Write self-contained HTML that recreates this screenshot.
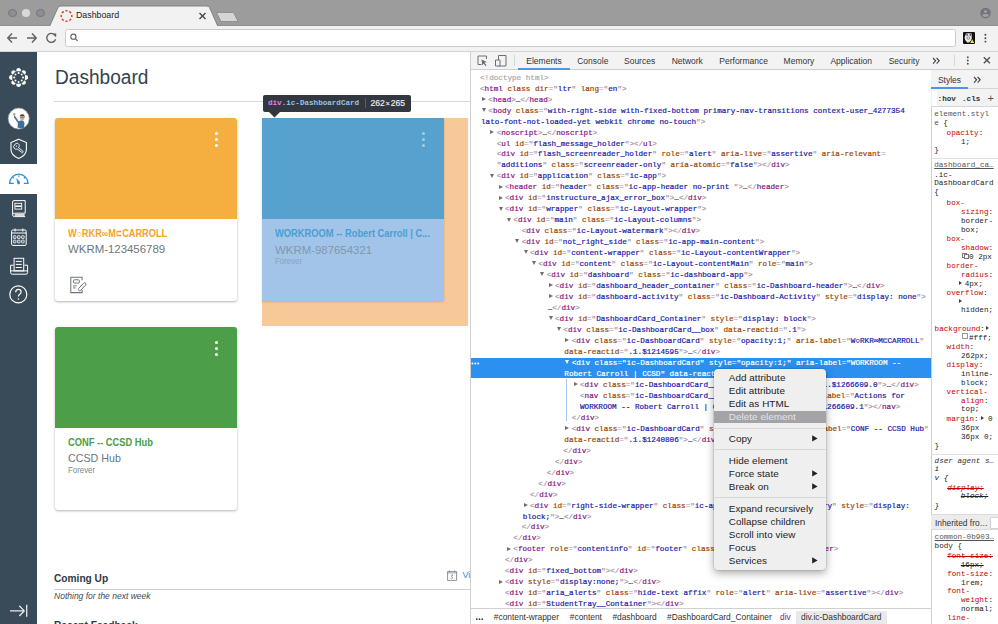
<!DOCTYPE html>
<html><head><meta charset="utf-8">
<style>
*{box-sizing:border-box}
html,body{margin:0;padding:0}
body{width:998px;height:624px;overflow:hidden;position:relative;background:#fff;font-family:"Liberation Sans",sans-serif}
.abs{position:absolute}
/* browser chrome */
#tabstrip{position:absolute;left:0;top:0;width:998px;height:26px;background:#9c9c9c}
#toolbar{position:absolute;left:0;top:26px;width:998px;height:26px;background:#f2f2f2;border-bottom:1.5px solid #d4d4d4}
.light{position:absolute;width:8.8px;height:8.8px;border-radius:50%;top:8.5px}
#addr{position:absolute;left:65px;top:29.3px;width:891px;height:18px;background:#fff;border:1px solid #cbcbcb;border-radius:2.5px}
/* canvas nav */
#nav{position:absolute;left:0;top:51.8px;width:37px;height:573px;background:#394b58}
#navactive{position:absolute;left:0;top:163.5px;width:37px;height:30.5px;background:#fff}
/* content */
.card{position:absolute;width:182px;height:183px;background:#fff;border-radius:3px;box-shadow:0 1px 2.5px rgba(0,0,0,.3);overflow:hidden}
.card .hd{position:absolute;left:0;top:0;width:100%;height:101px}
.dots{position:absolute;width:3px;height:3px;background:#fff;border-radius:50%}
.ttl{position:absolute;left:13px;font-weight:bold;font-size:10.3px;line-height:1;white-space:nowrap;transform:scaleX(0.906);transform-origin:0 0}
.sub{position:absolute;left:13px;font-size:10.7px;line-height:1;color:#6b7780;white-space:nowrap;transform-origin:0 0}
.term{position:absolute;left:13px;font-size:8.2px;line-height:1;color:#7c8890;white-space:nowrap;transform:scaleX(0.959);transform-origin:0 0}
/* devtools */
#dt{position:absolute;left:470px;top:52px;width:528px;height:572px;background:#fff;border-left:1px solid #d0d0d0}
#dttabs{position:absolute;left:471px;top:52px;width:527px;height:17.5px;background:#f3f3f3;border-bottom:1px solid #cdcdcd}
.tab{position:absolute;top:57px;font-size:8.5px;color:#333;white-space:nowrap;line-height:1}
.ln{position:absolute;-webkit-text-stroke:0.2px currentColor;white-space:pre;font-family:"Liberation Mono",monospace;font-size:7.63px;line-height:10px;height:10px}
.ln i{font-style:normal;-webkit-text-stroke:0.2px}
.t{color:#881280}
.b{color:#a894a6}
.a{color:#994500}
.v{color:#1a1aa6}
.e{color:#222}
.dt{color:#a9a9a9}
.sel i{color:#fff!important}
.ar{position:absolute;width:0;height:0}
.ar.r{border-left:4px solid #6e6e6e;border-top:2.6px solid transparent;border-bottom:2.6px solid transparent}
.ar.r.w{border-left-color:#fff}.ar.d.w{border-top-color:#fff}
.ar.d{border-top:4px solid #6e6e6e;border-left:2.6px solid transparent;border-right:2.6px solid transparent}
.sty{position:absolute;white-space:pre;font-family:"Liberation Mono",monospace;font-size:7.63px;line-height:10px;color:#222}
.pn{color:#c80000}
.crumb{position:absolute;top:612.5px;font-size:8.4px;color:#333;line-height:1;white-space:nowrap}
.menu{position:absolute;font-size:9.9px;letter-spacing:0.05px;color:#333;white-space:nowrap;line-height:1}
</style></head><body>

<!-- ============ BROWSER CHROME ============ -->
<div id="tabstrip"></div><div class="abs" style="left:0;top:25px;width:998px;height:1px;background:#8f8f8f"></div>
<div class="light" style="left:7.9px;top:8.7px;background:#8d8d93;border:1px solid #77777c"></div>
<div class="light" style="left:22.4px;top:9.3px;width:7.6px;height:7.6px;background:#d9d9d9"></div>
<div class="light" style="left:35.8px;top:8.7px;background:#8d8d93;border:1px solid #77777c"></div>
<svg class="abs" style="left:0;top:0" width="260" height="27">
  <path d="M49.5 26.5 L58 7.5 Q59 6 61 6 L206.5 6 Q208.5 6 209.5 7.5 L218 26.5 Z" fill="#f2f2f2" stroke="#7c7c7c" stroke-width="0.9"/>
  <path d="M216.5 12.5 L233.5 12.5 L238 21.5 L221 21.5 Z" fill="#d5d5d5" stroke="#868686" stroke-width="0.8"/>
</svg>
<svg class="abs" style="left:978px;top:5px" width="16" height="16">
  <circle cx="7.5" cy="8.1" r="5.3" fill="#72767c"/>
  <circle cx="7.5" cy="6.4" r="1.5" fill="#a3a3a3"/>
  <ellipse cx="7.5" cy="10.4" rx="3.1" ry="1.35" fill="#a3a3a3"/>
</svg>
<div id="toolbar"></div>
<svg class="abs" style="left:0;top:0" width="260" height="27">
  <circle cx="66.5" cy="16" r="5.3" fill="none" stroke="#de4a32" stroke-width="1.55" pathLength="8" stroke-dasharray="0.56 0.44" stroke-dashoffset="0.28"/>
  <path d="M199.5 13 L205.5 19 M205.5 13 L199.5 19" stroke="#444" stroke-width="1.3"/>
</svg>
<div class="abs" style="left:76px;top:11px;font-size:8.8px;color:#1a1a1a;line-height:1">Dashboard</div>
<div id="addr"></div>
<svg class="abs" style="left:0;top:25px" width="90" height="26">
  <path d="M8 13 L17 13 M12 8.5 L7.8 13 L12 17.5" fill="none" stroke="#5f6368" stroke-width="1.5"/>
  <path d="M27 13 L36 13 M32 8.5 L36.2 13 L32 17.5" fill="none" stroke="#5f6368" stroke-width="1.5"/>
  <path d="M54.6 9.8 A4.5 4.5 0 1 0 55.6 14.2" fill="none" stroke="#5f6368" stroke-width="1.4"/>
  <path d="M52.4 8.9 L56.3 8.2 L56.1 12.2 Z" fill="#5f6368"/>
  <circle cx="73.4" cy="11.7" r="2.6" fill="none" stroke="#5f6368" stroke-width="1.1"/>
  <path d="M75.3 13.6 L77.6 15.9" stroke="#5f6368" stroke-width="1.3"/>
</svg>
<!-- ext icon + menu -->
<div class="abs" style="left:963px;top:32px;width:11.5px;height:11.5px;background:#111;border-radius:1px"></div>
<svg class="abs" style="left:963px;top:32px" width="12" height="12">
  <path d="M3 1.6 Q5.5 0.8 8.6 1.6 L8.8 6.5 Q8 9.5 6 10.6 L4.2 10.4 Q1.5 8.6 1.6 5.6 Z" fill="#e8e8e8"/>
  <circle cx="4.1" cy="2.9" r="0.8" fill="#222"/><circle cx="7.3" cy="2.9" r="0.8" fill="#222"/>
  <circle cx="5.3" cy="6" r="1.4" fill="none" stroke="#777" stroke-width="0.7"/>
  <path d="M7.2 11 L9.2 7.2 L11.3 11 Z" fill="#f2e23a"/>
</svg>
<svg class="abs" style="left:980px;top:30px" width="12" height="16"><g fill="#444"><circle cx="5.4" cy="4.7" r="0.95"/><circle cx="5.4" cy="8.2" r="0.95"/><circle cx="5.4" cy="11.6" r="0.95"/></g></svg>

<!-- ============ CANVAS NAV ============ -->
<div id="nav"></div>
<div id="navactive"></div>
<svg class="abs" style="left:0;top:0" width="37" height="624">
  <!-- canvas logo -->
  <g transform="translate(18.6,77.5)">
    <path d="M-2.40 -6.30 A2.4 3.2 0.0 0 1 2.40 -6.30 Z M2.76 -6.15 A2.4 3.2 45.0 0 1 6.15 -2.76 Z M6.30 -2.40 A2.4 3.2 90.0 0 1 6.30 2.40 Z M6.15 2.76 A2.4 3.2 135.0 0 1 2.76 6.15 Z M2.40 6.30 A2.4 3.2 180.0 0 1 -2.40 6.30 Z M-2.76 6.15 A2.4 3.2 225.0 0 1 -6.15 2.76 Z M-6.30 2.40 A2.4 3.2 270.0 0 1 -6.30 -2.40 Z M-6.15 -2.76 A2.4 3.2 315.0 0 1 -2.76 -6.15 Z" fill="#fff"/>
    <g fill="#fff">
      <circle cx="4.4" cy="0" r="1"/><circle cx="-4.4" cy="0" r="1"/><circle cx="0" cy="4.4" r="1"/><circle cx="0" cy="-4.4" r="1"/>
      <circle cx="3.1" cy="3.1" r="1"/><circle cx="-3.1" cy="3.1" r="1"/><circle cx="3.1" cy="-3.1" r="1"/><circle cx="-3.1" cy="-3.1" r="1"/>
    </g>
  </g>
  <!-- avatar -->
  <circle cx="18.7" cy="118.6" r="10.5" fill="#fff" stroke="#9aa3aa" stroke-width="0.6"/>
  <path d="M17.5 127.5 L18 122 Q19.5 120.3 21.8 120.3 Q24 120.5 24.5 123 L24 127.8 Q21 129 17.5 127.5 Z" fill="#3f6e96"/>
  <path d="M14.2 114.5 L15.2 116.2 L19 121.8 L18 123 L14 117.5 Z" fill="#3f6e96"/>
  <circle cx="14.2" cy="114.3" r="1.2" fill="#c9a07e"/>
  <ellipse cx="22.2" cy="117.6" rx="2.3" ry="2.8" fill="#d9ad8a"/>
  <path d="M19.8 116.5 Q20 114 22.4 114.2 Q24.8 114.3 24.7 117.5 L24 116 L20.5 116 Z" fill="#5a3826"/>
  <path d="M20 117.3 H24.3" stroke="#4a6d8a" stroke-width="0.8"/>
  <!-- shield -->
  <path d="M18.7 139.2 L26.4 142.6 V149.5 Q26.4 155.5 18.7 158.4 Q11 155.5 11 149.5 V142.6 Z" fill="none" stroke="#fff" stroke-width="1.1"/>
  <path d="M14.6 145 A2.4 2.4 0 1 1 18.4 147.6 L22.9 151.2 Q23.6 152.4 22.4 152.8 L17.2 149 A2.4 2.4 0 0 1 14.6 145 Z" fill="none" stroke="#fff" stroke-width="0.9"/>
  <circle cx="16.4" cy="146.1" r="0.7" fill="#fff"/>
  <!-- dashboard speedometer (active) -->
  <g fill="none" stroke="#2c8fd6" stroke-width="1.3">
    <path d="M13.8 183.4 H9.6 A9.2 9.2 0 0 1 28 183.4 H23.8"/>
    <path d="M18.8 175.4 V176.8 M12.6 177.3 L13.6 178.3 M25 177.3 L24 178.3"/>
  </g>
  <path d="M16.2 178 L20 182.1 Q20.4 184.3 18.6 184.5 Q16.9 184.3 17.1 182.3 Z" fill="#2c8fd6"/>
  <!-- book -->
  <g fill="none" stroke="#fff" stroke-width="1">
    <path d="M25.2 213.2 V200.6 H14 Q12.6 200.6 12.6 202 V214.8 Q12.6 216.6 14.4 216.6 H25.2"/>
    <path d="M12.8 214.4 Q12.8 213.2 14.4 213.2 H25.2"/>
  </g>
  <rect x="14.9" y="203.3" width="6.8" height="5.8" fill="none" stroke="#fff" stroke-width="0.9"/>
  <rect x="15.3" y="205.4" width="6" height="1.6" fill="#fff"/>
  <rect x="14.6" y="213.8" width="10" height="2.3" fill="#d5d9dc"/>
  <!-- calendar -->
  <g fill="none" stroke="#fff" stroke-width="1">
    <rect x="11.6" y="230" width="14.6" height="15.4" rx="1.2"/>
    <path d="M11.6 233 H26.2 M15 228.5 V231.5 M22.8 228.5 V231.5"/>
  </g>
  <g fill="#5d6b75" stroke="#fff" stroke-width="0.75">
    <rect x="13.4" y="235.7" width="2.6" height="2.8" rx="0.5"/><rect x="17.5" y="235.7" width="2.6" height="2.8" rx="0.5"/><rect x="21.6" y="235.7" width="2.6" height="2.8" rx="0.5"/>
    <rect x="13.4" y="240.1" width="2.6" height="2.8" rx="0.5"/><rect x="17.5" y="240.1" width="2.6" height="2.8" rx="0.5"/><rect x="21.6" y="240.1" width="2.6" height="2.8" rx="0.5"/>
  </g>
  <!-- inbox -->
  <g fill="none" stroke="#fff" stroke-width="1">
    <rect x="14.1" y="258.3" width="9.6" height="12.6"/>
    <path d="M15.8 261.4 H21.8 M15.8 264.4 H21.8 M15.8 267.5 H21.8"/>
    <path d="M13.6 265.2 H10.6 V272.5 Q10.6 274.2 12.3 274.2 H25.9 Q27.6 274.2 27.6 272.5 V265.2 H24.3"/>
    <path d="M10.8 270.9 H27.4"/>
  </g>
  <!-- help -->
  <circle cx="18.3" cy="294.4" r="8.5" fill="none" stroke="#fff" stroke-width="1.2"/>
  <path d="M15.7 292.2 Q15.7 289.3 18.4 289.3 Q21.1 289.3 21.1 291.9 Q21.1 293.5 19.5 294.4 Q18.4 295 18.4 296.6" fill="none" stroke="#fff" stroke-width="1.2"/>
  <circle cx="18.4" cy="299" r="0.8" fill="#fff"/>
  <!-- collapse -->
  <g fill="none" stroke="#e8eaec" stroke-width="1.3">
    <path d="M10 610.9 H24 M19.3 605.8 L24.2 610.9 L19.3 616"/>
    <path d="M26.7 604.7 V616.8"/>
  </g>
</svg>


<!-- ============ CONTENT ============ -->
<div class="abs" style="left:54.8px;top:66.7px;font-size:20px;color:#34434e;line-height:1;transform:scaleX(0.954);transform-origin:0 0;white-space:nowrap">Dashboard</div>
<div class="abs" style="left:54px;top:100.5px;width:416px;height:1px;background:#d3d9dd"></div>

<div class="card" style="left:55px;top:118px">
  <div class="hd" style="background:#f5af40"></div>
  <div class="dots" style="left:159.5px;top:14px"></div>
  <div class="dots" style="left:159.5px;top:20px"></div>
  <div class="dots" style="left:159.5px;top:26px"></div>
  <div class="ttl" style="top:110.8px;color:#f2a232;transform:scaleX(0.895)">W<span style="font-size:9.5px;font-weight:normal;position:relative;top:0px">&#9675;</span>RKR<span style="font-size:10px">&#8734;</span>M<span style="font-size:8px;position:relative;top:-1px">&#8847;</span>CARROLL</div>
  <div class="sub" style="top:126.4px;transform:scaleX(1.068)">WKRM-123456789</div>
  <svg class="abs" style="left:13px;top:157px" width="22" height="22">
    <path d="M14.1 5.2 V2.2 H2.8 V17.6 H14.1 V15" fill="none" stroke="#6b757d" stroke-width="1.05"/>
    <rect x="5.4" y="4.8" width="6" height="3.3" rx="1" fill="none" stroke="#6b757d" stroke-width="1"/>
    <path d="M5 10.9 H8.8 M5 12.9 H7.4" stroke="#8a939a" stroke-width="1.1"/>
    <path d="M10.7 13.4 L15.6 8.2 Q16.7 7.2 17.6 8.1 Q18.5 9.1 17.5 10.2 L12.6 15.4 Q11.6 16.3 10.8 15.5 Q10 14.5 10.7 13.4 Z" fill="none" stroke="#6b757d" stroke-width="1"/>
  </svg>
</div>

<div class="card" style="left:55px;top:327px">
  <div class="hd" style="background:#4c9e48"></div>
  <div class="dots" style="left:159.5px;top:14px"></div>
  <div class="dots" style="left:159.5px;top:20px"></div>
  <div class="dots" style="left:159.5px;top:26px"></div>
  <div class="ttl" style="top:110.8px;color:#4a9e47">CONF -- CCSD Hub</div>
  <div class="sub" style="top:126.2px">CCSD Hub</div>
  <div class="term" style="top:140.3px">Forever</div>
</div>

<!-- inspected card with overlay -->
<div class="abs" style="left:262px;top:118px;width:206px;height:208px;background:#f7c898"></div>
<div class="abs" style="left:262px;top:118px;width:182px;height:183px;background:#a1c4e8;box-shadow:0 1px 2px rgba(0,0,0,.15)"></div>
<div class="abs" style="left:262px;top:118px;width:182px;height:101px;background:#56a1cd"></div>
<div class="dots" style="left:421.5px;top:132px;background:#a9cbe7"></div>
<div class="dots" style="left:421.5px;top:138px;background:#a9cbe7"></div>
<div class="dots" style="left:421.5px;top:144px;background:#a9cbe7"></div>
<div class="ttl" style="left:275px;top:228.6px;color:#4a9fd0">WORKROOM -- Robert Carroll | C...</div>
<div class="sub" style="left:275px;top:244.9px;color:#7f98ad;transform:scaleX(1.068)">WKRM-987654321</div>
<div class="term" style="left:275px;top:257.9px;color:#8aa3b8">Forever</div>

<!-- tooltip -->
<div class="abs" style="left:263px;top:95px;width:148px;height:16.5px;background:#333740;border-radius:2px"></div>
<svg class="abs" style="left:266px;top:110px" width="16" height="8"><path d="M2 1 L8.5 7.5 L15 1 Z" fill="#333740"/></svg>
<div class="abs" style="left:268px;top:100px;font-family:'Liberation Mono',monospace;font-size:7.6px;line-height:1;white-space:pre;font-weight:bold"><span style="color:#e97be0">div</span><span style="color:#93c3ec">.ic-DashboardCard</span></div>
<div class="abs" style="left:364.5px;top:98px;width:1px;height:10px;background:#5a5e66"></div>
<div class="abs" style="left:370.4px;top:98.8px;font-size:8.6px;line-height:1;color:#f0f0f0;white-space:nowrap;-webkit-text-stroke:0.15px #f0f0f0">262<span style="font-size:7.5px;margin:0 0.8px">&#215;</span>265</div>

<!-- coming up -->
<div class="abs" style="left:54.4px;top:571.5px;font-size:11.7px;font-weight:bold;color:#2d3b45;line-height:1;transform:scaleX(0.869);transform-origin:0 0;white-space:nowrap">Coming Up</div>
<div class="abs" style="left:54px;top:588.7px;width:416px;height:1px;background:#c9cfd3"></div>
<div class="abs" style="left:54.4px;top:592.3px;font-size:9px;font-style:italic;color:#3d4a52;line-height:1;transform:scaleX(0.946);transform-origin:0 0;white-space:nowrap">Nothing for the next week</div>
<div class="abs" style="left:54.4px;top:618.5px;font-size:11.7px;font-weight:bold;color:#2d3b45;line-height:1;transform:scaleX(0.869);transform-origin:0 0;white-space:nowrap">Recent Feedback</div>
<svg class="abs" style="left:447px;top:570px" width="11" height="11">
  <path d="M0.6 1.6 H9.6 V10.4 H0.6 Z" fill="none" stroke="#73818b" stroke-width="0.85"/>
  <path d="M0.6 2.9 H9.6 M2.6 0.3 V2.2 M7.6 0.3 V2.2" stroke="#73818b" stroke-width="0.7"/>
  <path d="M3.8 5 H6 L4.5 6.5 Q6.2 6.7 5.5 8.3 Q4.5 8.9 3.6 8.3" fill="none" stroke="#73818b" stroke-width="0.7"/>
</svg>
<div class="abs" style="left:462.5px;top:571px;font-size:9px;color:#2d8ed5;line-height:1">Vi</div>

<!-- ============ DEVTOOLS ============ -->
<div id="dt"></div>
<div id="dttabs"></div>
<!-- selected row bg -->
<div class="abs" style="left:471px;top:357.5px;width:459.5px;height:20.3px;background:#2b90ef"></div>
<svg class="abs" style="left:471px;top:361px" width="10" height="5"><g fill="#fff"><circle cx="1.4" cy="2.5" r="1"/><circle cx="4.3" cy="2.5" r="1"/><circle cx="7.2" cy="2.5" r="1"/></g></svg>
<!-- selected children guide line -->
<div class="abs" style="left:565.5px;top:379px;width:1px;height:42px;background:#a7c3ef"></div>

<div class="ln" style="left:480.00px;top:72.70px"><i class="dt">&lt;!doctype html&gt;</i></div>
<div class="ln" style="left:480.00px;top:83.67px"><i class="b">&lt;</i><i class="t">html</i> <i class="a">class</i> <i class="a">dir</i><i class="b">=&quot;</i><i class="v">ltr</i><i class="b">&quot;</i> <i class="a">lang</i><i class="b">=&quot;</i><i class="v">en</i><i class="b">&quot;&gt;</i></div>
<span class="ar r" style="left:482.13px;top:96.84px"></span><div class="ln" style="left:488.33px;top:94.64px"><i class="b">&lt;</i><i class="t">head</i><i class="b">&gt;</i><i class="e">…</i><i class="b">&lt;/</i><i class="t">head</i><i class="b">&gt;</i></div>
<span class="ar d" style="left:482.13px;top:107.81px"></span><div class="ln" style="left:488.33px;top:105.61px"><i class="b">&lt;</i><i class="t">body</i> <i class="a">class</i><i class="b">=&quot;</i><i class="v">with-right-side with-fixed-bottom primary-nav-transitions context-user_4277354</i></div>
<div class="ln" style="left:481.03px;top:116.58px"><i class="v">lato-font-not-loaded-yet webkit chrome no-touch</i><i class="b">&quot;&gt;</i></div>
<span class="ar r" style="left:490.47px;top:129.75px"></span><div class="ln" style="left:496.67px;top:127.55px"><i class="b">&lt;</i><i class="t">noscript</i><i class="b">&gt;</i><i class="e">…</i><i class="b">&lt;/</i><i class="t">noscript</i><i class="b">&gt;</i></div>
<div class="ln" style="left:496.67px;top:138.52px"><i class="b">&lt;</i><i class="t">ul</i> <i class="a">id</i><i class="b">=&quot;</i><i class="v">flash_message_holder</i><i class="b">&quot;</i><i class="b">&gt;</i><i class="b">&lt;/</i><i class="t">ul</i><i class="b">&gt;</i></div>
<div class="ln" style="left:496.67px;top:149.49px"><i class="b">&lt;</i><i class="t">div</i> <i class="a">id</i><i class="b">=&quot;</i><i class="v">flash_screenreader_holder</i><i class="b">&quot;</i> <i class="a">role</i><i class="b">=&quot;</i><i class="v">alert</i><i class="b">&quot;</i> <i class="a">aria-live</i><i class="b">=&quot;</i><i class="v">assertive</i><i class="b">&quot;</i> <i class="a">aria-relevant</i><i class="b">=</i></div>
<div class="ln" style="left:496.67px;top:160.46px"><i class="b">&quot;</i><i class="v">additions</i><i class="b">&quot;</i> <i class="a">class</i><i class="b">=&quot;</i><i class="v">screenreader-only</i><i class="b">&quot;</i> <i class="a">aria-atomic</i><i class="b">=&quot;</i><i class="v">false</i><i class="b">&quot;&gt;</i><i class="b">&lt;/</i><i class="t">div</i><i class="b">&gt;</i></div>
<span class="ar d" style="left:490.47px;top:173.63px"></span><div class="ln" style="left:496.67px;top:171.43px"><i class="b">&lt;</i><i class="t">div</i> <i class="a">id</i><i class="b">=&quot;</i><i class="v">application</i><i class="b">&quot;</i> <i class="a">class</i><i class="b">=&quot;</i><i class="v">ic-app</i><i class="b">&quot;</i><i class="b">&gt;</i></div>
<span class="ar r" style="left:498.80px;top:184.60px"></span><div class="ln" style="left:505.00px;top:182.40px"><i class="b">&lt;</i><i class="t">header</i> <i class="a">id</i><i class="b">=&quot;</i><i class="v">header</i><i class="b">&quot;</i> <i class="a">class</i><i class="b">=&quot;</i><i class="v">ic-app-header no-print </i><i class="b">&quot;</i><i class="b">&gt;</i><i class="e">…</i><i class="b">&lt;/</i><i class="t">header</i><i class="b">&gt;</i></div>
<span class="ar r" style="left:498.80px;top:195.57px"></span><div class="ln" style="left:505.00px;top:193.37px"><i class="b">&lt;</i><i class="t">div</i> <i class="a">id</i><i class="b">=&quot;</i><i class="v">instructure_ajax_error_box</i><i class="b">&quot;</i><i class="b">&gt;</i><i class="e">…</i><i class="b">&lt;/</i><i class="t">div</i><i class="b">&gt;</i></div>
<span class="ar d" style="left:498.80px;top:206.54px"></span><div class="ln" style="left:505.00px;top:204.34px"><i class="b">&lt;</i><i class="t">div</i> <i class="a">id</i><i class="b">=&quot;</i><i class="v">wrapper</i><i class="b">&quot;</i> <i class="a">class</i><i class="b">=&quot;</i><i class="v">ic-Layout-wrapper</i><i class="b">&quot;</i><i class="b">&gt;</i></div>
<span class="ar d" style="left:507.13px;top:217.51px"></span><div class="ln" style="left:513.33px;top:215.31px"><i class="b">&lt;</i><i class="t">div</i> <i class="a">id</i><i class="b">=&quot;</i><i class="v">main</i><i class="b">&quot;</i> <i class="a">class</i><i class="b">=&quot;</i><i class="v">ic-Layout-columns</i><i class="b">&quot;</i><i class="b">&gt;</i></div>
<div class="ln" style="left:521.66px;top:226.28px"><i class="b">&lt;</i><i class="t">div</i> <i class="a">class</i><i class="b">=&quot;</i><i class="v">ic-Layout-watermark</i><i class="b">&quot;</i><i class="b">&gt;</i><i class="b">&lt;/</i><i class="t">div</i><i class="b">&gt;</i></div>
<span class="ar d" style="left:515.46px;top:239.45px"></span><div class="ln" style="left:521.66px;top:237.25px"><i class="b">&lt;</i><i class="t">div</i> <i class="a">id</i><i class="b">=&quot;</i><i class="v">not_right_side</i><i class="b">&quot;</i> <i class="a">class</i><i class="b">=&quot;</i><i class="v">ic-app-main-content</i><i class="b">&quot;</i><i class="b">&gt;</i></div>
<span class="ar d" style="left:523.80px;top:250.42px"></span><div class="ln" style="left:530.00px;top:248.22px"><i class="b">&lt;</i><i class="t">div</i> <i class="a">id</i><i class="b">=&quot;</i><i class="v">content-wrapper</i><i class="b">&quot;</i> <i class="a">class</i><i class="b">=&quot;</i><i class="v">ic-Layout-contentWrapper</i><i class="b">&quot;</i><i class="b">&gt;</i></div>
<span class="ar d" style="left:532.13px;top:261.39px"></span><div class="ln" style="left:538.33px;top:259.19px"><i class="b">&lt;</i><i class="t">div</i> <i class="a">id</i><i class="b">=&quot;</i><i class="v">content</i><i class="b">&quot;</i> <i class="a">class</i><i class="b">=&quot;</i><i class="v">ic-Layout-contentMain</i><i class="b">&quot;</i> <i class="a">role</i><i class="b">=&quot;</i><i class="v">main</i><i class="b">&quot;</i><i class="b">&gt;</i></div>
<span class="ar d" style="left:540.46px;top:272.36px"></span><div class="ln" style="left:546.66px;top:270.16px"><i class="b">&lt;</i><i class="t">div</i> <i class="a">id</i><i class="b">=&quot;</i><i class="v">dashboard</i><i class="b">&quot;</i> <i class="a">class</i><i class="b">=&quot;</i><i class="v">ic-dashboard-app</i><i class="b">&quot;</i><i class="b">&gt;</i></div>
<span class="ar r" style="left:548.80px;top:283.33px"></span><div class="ln" style="left:555.00px;top:281.13px"><i class="b">&lt;</i><i class="t">div</i> <i class="a">id</i><i class="b">=&quot;</i><i class="v">dashboard_header_container</i><i class="b">&quot;</i> <i class="a">class</i><i class="b">=&quot;</i><i class="v">ic-Dashboard-header</i><i class="b">&quot;</i><i class="b">&gt;</i><i class="e">…</i><i class="b">&lt;/</i><i class="t">div</i><i class="b">&gt;</i></div>
<span class="ar r" style="left:548.80px;top:294.30px"></span><div class="ln" style="left:555.00px;top:292.10px"><i class="b">&lt;</i><i class="t">div</i> <i class="a">id</i><i class="b">=&quot;</i><i class="v">dashboard-activity</i><i class="b">&quot;</i> <i class="a">class</i><i class="b">=&quot;</i><i class="v">ic-Dashboard-Activity</i><i class="b">&quot;</i> <i class="a">style</i><i class="b">=&quot;</i><i class="v">display: none</i><i class="b">&quot;</i><i class="b">&gt;</i></div>
<div class="ln" style="left:547.70px;top:303.07px"><i class="e">…</i><i class="b">&lt;/</i><i class="t">div</i><i class="b">&gt;</i></div>
<span class="ar d" style="left:548.80px;top:316.24px"></span><div class="ln" style="left:555.00px;top:314.04px"><i class="b">&lt;</i><i class="t">div</i> <i class="a">id</i><i class="b">=&quot;</i><i class="v">DashboardCard_Container</i><i class="b">&quot;</i> <i class="a">style</i><i class="b">=&quot;</i><i class="v">display: block</i><i class="b">&quot;</i><i class="b">&gt;</i></div>
<span class="ar d" style="left:557.13px;top:327.21px"></span><div class="ln" style="left:563.33px;top:325.01px"><i class="b">&lt;</i><i class="t">div</i> <i class="a">class</i><i class="b">=&quot;</i><i class="v">ic-DashboardCard__box</i><i class="b">&quot;</i> <i class="a">data-reactid</i><i class="b">=&quot;</i><i class="v">.1</i><i class="b">&quot;</i><i class="b">&gt;</i></div>
<span class="ar r" style="left:565.46px;top:338.18px"></span><div class="ln" style="left:571.66px;top:335.98px"><i class="b">&lt;</i><i class="t">div</i> <i class="a">class</i><i class="b">=&quot;</i><i class="v">ic-DashboardCard</i><i class="b">&quot;</i> <i class="a">style</i><i class="b">=&quot;</i><i class="v">opacity:1;</i><i class="b">&quot;</i> <i class="a">aria-label</i><i class="b">=&quot;</i><i class="v">W○RKR∞M⊏CARROLL</i><i class="b">&quot;</i></div>
<div class="ln" style="left:564.36px;top:346.95px"><i class="a">data-reactid</i><i class="b">=&quot;</i><i class="v">.1.$1214595</i><i class="b">&quot;&gt;</i><i class="e">…</i><i class="b">&lt;/</i><i class="t">div</i><i class="b">&gt;</i></div>
<span class="ar d w" style="left:565.46px;top:360.12px"></span><div class="ln sel" style="left:571.66px;top:357.92px"><i class="b">&lt;</i><i class="t">div</i> <i class="a">class</i><i class="b">=&quot;</i><i class="v">ic-DashboardCard</i><i class="b">&quot;</i> <i class="a">style</i><i class="b">=&quot;</i><i class="v">opacity:1;</i><i class="b">&quot;</i> <i class="a">aria-label</i><i class="b">=&quot;</i><i class="v">WORKROOM --</i></div>
<div class="ln sel" style="left:564.36px;top:368.89px"><i class="v">Robert Carroll | CCSD</i><i class="b">&quot;</i> <i class="a">data-reactid</i><i class="b">=&quot;</i><i class="v">.1.$1266609</i><i class="b">&quot;&gt;</i></div>
<span class="ar r" style="left:573.80px;top:382.06px"></span><div class="ln" style="left:580.00px;top:379.86px"><i class="b">&lt;</i><i class="t">div</i> <i class="a">class</i><i class="b">=&quot;</i><i class="v">ic-DashboardCard__header</i><i class="b">&quot;</i> <i class="a">data-reactid</i><i class="b">=&quot;</i><i class="v">.1.$1266609.0</i><i class="b">&quot;</i><i class="b">&gt;</i><i class="e">…</i><i class="b">&lt;/</i><i class="t">div</i><i class="b">&gt;</i></div>
<div class="ln" style="left:580.00px;top:390.83px"><i class="b">&lt;</i><i class="t">nav</i> <i class="a">class</i><i class="b">=&quot;</i><i class="v">ic-DashboardCard__action-container</i><i class="b">&quot;</i> <i class="a">aria-label</i><i class="b">=&quot;</i><i class="v">Actions for</i></div>
<div class="ln" style="left:580.00px;top:401.80px"><i class="v">WORKROOM -- Robert Carroll | CCSD</i><i class="b">&quot;</i> <i class="a">data-reactid</i><i class="b">=&quot;</i><i class="v">.1.$1266609.1</i><i class="b">&quot;&gt;</i><i class="b">&lt;/</i><i class="t">nav</i><i class="b">&gt;</i></div>
<div class="ln" style="left:571.66px;top:412.77px"><i class="b">&lt;/</i><i class="t">div</i><i class="b">&gt;</i></div>
<span class="ar r" style="left:565.46px;top:425.94px"></span><div class="ln" style="left:571.66px;top:423.74px"><i class="b">&lt;</i><i class="t">div</i> <i class="a">class</i><i class="b">=&quot;</i><i class="v">ic-DashboardCard</i><i class="b">&quot;</i> <i class="a">style</i><i class="b">=&quot;</i><i class="v">opacity:1;</i><i class="b">&quot;</i> <i class="a">aria-label</i><i class="b">=&quot;</i><i class="v">CONF -- CCSD Hub</i><i class="b">&quot;</i></div>
<div class="ln" style="left:564.36px;top:434.71px"><i class="a">data-reactid</i><i class="b">=&quot;</i><i class="v">.1.$1240806</i><i class="b">&quot;&gt;</i><i class="e">…</i><i class="b">&lt;/</i><i class="t">div</i><i class="b">&gt;</i></div>
<div class="ln" style="left:563.33px;top:445.68px"><i class="b">&lt;/</i><i class="t">div</i><i class="b">&gt;</i></div>
<div class="ln" style="left:555.00px;top:456.65px"><i class="b">&lt;/</i><i class="t">div</i><i class="b">&gt;</i></div>
<div class="ln" style="left:546.66px;top:467.62px"><i class="b">&lt;/</i><i class="t">div</i><i class="b">&gt;</i></div>
<div class="ln" style="left:538.33px;top:478.59px"><i class="b">&lt;/</i><i class="t">div</i><i class="b">&gt;</i></div>
<div class="ln" style="left:530.00px;top:489.56px"><i class="b">&lt;/</i><i class="t">div</i><i class="b">&gt;</i></div>
<span class="ar r" style="left:523.80px;top:502.73px"></span><div class="ln" style="left:530.00px;top:500.53px"><i class="b">&lt;</i><i class="t">div</i> <i class="a">id</i><i class="b">=&quot;</i><i class="v">right-side-wrapper</i><i class="b">&quot;</i> <i class="a">class</i><i class="b">=&quot;</i><i class="v">ic-app-main-content__secondary</i><i class="b">&quot;</i> <i class="a">style</i><i class="b">=&quot;</i><i class="v">display:</i></div>
<div class="ln" style="left:522.70px;top:511.50px"><i class="v">block;</i><i class="b">&quot;&gt;</i><i class="e">…</i><i class="b">&lt;/</i><i class="t">div</i><i class="b">&gt;</i></div>
<div class="ln" style="left:521.66px;top:522.47px"><i class="b">&lt;/</i><i class="t">div</i><i class="b">&gt;</i></div>
<div class="ln" style="left:513.33px;top:533.44px"><i class="b">&lt;/</i><i class="t">div</i><i class="b">&gt;</i></div>
<span class="ar r" style="left:507.13px;top:546.61px"></span><div class="ln" style="left:513.33px;top:544.41px"><i class="b">&lt;</i><i class="t">footer</i> <i class="a">role</i><i class="b">=&quot;</i><i class="v">contentinfo</i><i class="b">&quot;</i> <i class="a">id</i><i class="b">=&quot;</i><i class="v">footer</i><i class="b">&quot;</i> <i class="a">class</i><i class="b">=&quot;</i><i class="v">ic-app-footer</i><i class="b">&quot;</i><i class="b">&gt;</i><i class="e">…</i><i class="b">&lt;/</i><i class="t">footer</i><i class="b">&gt;</i></div>
<div class="ln" style="left:505.00px;top:555.38px"><i class="b">&lt;/</i><i class="t">div</i><i class="b">&gt;</i></div>
<div class="ln" style="left:505.00px;top:566.35px"><i class="b">&lt;</i><i class="t">div</i> <i class="a">id</i><i class="b">=&quot;</i><i class="v">fixed_bottom</i><i class="b">&quot;</i><i class="b">&gt;</i><i class="b">&lt;/</i><i class="t">div</i><i class="b">&gt;</i></div>
<span class="ar r" style="left:498.80px;top:579.52px"></span><div class="ln" style="left:505.00px;top:577.32px"><i class="b">&lt;</i><i class="t">div</i> <i class="a">style</i><i class="b">=&quot;</i><i class="v">display:none;</i><i class="b">&quot;</i><i class="b">&gt;</i><i class="e">…</i><i class="b">&lt;/</i><i class="t">div</i><i class="b">&gt;</i></div>
<div class="ln" style="left:505.00px;top:588.29px"><i class="b">&lt;</i><i class="t">div</i> <i class="a">id</i><i class="b">=&quot;</i><i class="v">aria_alerts</i><i class="b">&quot;</i> <i class="a">class</i><i class="b">=&quot;</i><i class="v">hide-text affix</i><i class="b">&quot;</i> <i class="a">role</i><i class="b">=&quot;</i><i class="v">alert</i><i class="b">&quot;</i> <i class="a">aria-live</i><i class="b">=&quot;</i><i class="v">assertive</i><i class="b">&quot;</i><i class="b">&gt;</i><i class="b">&lt;/</i><i class="t">div</i><i class="b">&gt;</i></div>
<div class="ln" style="left:505.00px;top:599.26px"><i class="b">&lt;</i><i class="t">div</i> <i class="a">id</i><i class="b">=&quot;</i><i class="v">StudentTray__Container</i><i class="b">&quot;</i><i class="b">&gt;</i><i class="b">&lt;/</i><i class="t">div</i><i class="b">&gt;</i></div>
<!-- devtools toolbar icons -->
<svg class="abs" style="left:471px;top:51px" width="50" height="18">
  <path d="M10.5 13.5 H7 V5 H15.5 V8" fill="none" stroke="#6e6e6e" stroke-width="1"/>
  <path d="M10.5 8.5 L15.8 11 L13.4 11.8 L15.6 14.2 L14.6 15 L12.4 12.6 L11.2 14.6 Z" fill="#6e6e6e"/>
  <path d="M27.5 4.5 H35 V15 H27.5 Z" fill="none" stroke="#6e6e6e" stroke-width="1"/>
  <path d="M24.5 9 H29 V15 H24.5 Z" fill="#f3f3f3" stroke="#6e6e6e" stroke-width="1"/>
  <path d="M43.5 4 V15" stroke="#d6d6d6" stroke-width="1"/>
</svg>
<div class="abs" style="left:518px;top:67.5px;width:51.5px;height:2px;background:#4e94e8"></div>
<div class="tab" style="left:526.3px">Elements</div>
<div class="tab" style="left:577.2px">Console</div>
<div class="tab" style="left:624px">Sources</div>
<div class="tab" style="left:671.7px">Network</div>
<div class="tab" style="left:719.3px">Performance</div>
<div class="tab" style="left:783.6px">Memory</div>
<div class="tab" style="left:830.4px">Application</div>
<div class="tab" style="left:888.7px">Security</div>
<svg class="abs" style="left:932px;top:57px" width="9" height="8"><path d="M1 1 L3.6 3.8 L1 6.6 M4.6 1 L7.2 3.8 L4.6 6.6" fill="none" stroke="#444" stroke-width="1.15"/></svg>
<div class="abs" style="left:954px;top:55px;width:1px;height:11px;background:#d6d6d6"></div>
<svg class="abs" style="left:962px;top:52px" width="36" height="16"><g fill="#555"><circle cx="5.8" cy="5.3" r="0.95"/><circle cx="5.8" cy="8.5" r="0.95"/><circle cx="5.8" cy="11.8" r="0.95"/></g>
<path d="M21.8 5.2 L27.9 11.3 M27.9 5.2 L21.8 11.3" stroke="#555" stroke-width="1.45"/></svg>

<!-- breadcrumbs -->
<div class="abs" style="left:471px;top:608px;width:460px;height:16px;background:#fff;border-top:1px solid #d0d0d0"></div>
<div class="abs" style="left:796px;top:610.5px;width:91px;height:13.5px;background:#e9e9e9"></div>
<svg class="abs" style="left:474px;top:616px" width="12" height="6"><g fill="#333"><circle cx="2.8" cy="3.2" r="0.85"/><circle cx="5.5" cy="3.2" r="0.85"/><circle cx="8.2" cy="3.2" r="0.85"/></g></svg>
<div class="abs crumb" style="left:493.8px">#content-wrapper</div>
<div class="abs crumb" style="left:569.8px">#content</div>
<div class="abs crumb" style="left:612.4px">#dashboard</div>
<div class="abs crumb" style="left:667px">#DashboardCard_Container</div>
<div class="abs crumb" style="left:780.1px;color:#881280">div</div>
<div class="abs crumb" style="left:801px">div.ic-DashboardCard</div>

<!-- styles sidebar -->
<div class="abs" style="left:930.5px;top:69.5px;width:67.5px;height:554.5px;background:#fff;border-left:1px solid #d0d0d0"></div>
<div class="abs" style="left:931px;top:70px;width:67px;height:19px;background:#f3f3f3;border-bottom:1px solid #d6d6d6"></div>
<div class="abs" style="left:931px;top:87px;width:37px;height:2px;background:#4e94e8"></div>
<div class="tab" style="left:937.9px;top:76px">Styles</div>
<svg class="abs" style="left:972.8px;top:76.3px" width="9" height="8"><path d="M1 1 L3.6 3.8 L1 6.6 M4.6 1 L7.2 3.8 L4.6 6.6" fill="none" stroke="#444" stroke-width="1.15"/></svg>
<div class="abs" style="left:931px;top:89px;width:67px;height:18px;background:#f3f3f3;border-bottom:1px solid #d6d6d6"></div>
<div class="abs" style="left:931.5px;top:91px;width:5.5px;height:14.5px;background:#fff"></div>
<div class="sty" style="left:937.6px;top:94px;font-weight:bold;color:#333">:hov</div><div class="sty" style="left:962px;top:94px;font-weight:bold;color:#333">.cls</div>
<div class="abs" style="left:987.5px;top:92.5px;font-size:11px;color:#555;line-height:1">+</div>
<div class="sty" style="left:934.2px;top:108.90px"><span style="color:#555">element.styl</span></div>
<div class="sty" style="left:934.2px;top:117.90px"><span style="color:#555">e</span> {</div>
<div class="sty" style="left:946.6px;top:128.10px"><span class="pn">opacity</span>:</div>
<div class="sty" style="left:961px;top:136.90px">1;</div>
<div class="sty" style="left:934.2px;top:145.30px">}</div>
<div class="sty" style="left:934.2px;top:160.10px"><span style="text-decoration:underline;color:#555">dashboard_ca…</span></div>
<div class="sty" style="left:934.2px;top:169.60px">.ic-</div>
<div class="sty" style="left:934.2px;top:178.10px">DashboardCard</div>
<div class="sty" style="left:934.2px;top:187.10px">{</div>
<div class="sty" style="left:946.6px;top:197.80px"><span class="pn">box-</span></div>
<div class="sty" style="left:961px;top:206.90px"><span class="pn">sizing</span>:</div>
<div class="sty" style="left:961px;top:216.10px">border-</div>
<div class="sty" style="left:961px;top:224.90px">box;</div>
<div class="sty" style="left:946.6px;top:233.90px"><span class="pn">box-</span></div>
<div class="sty" style="left:961px;top:242.90px"><span class="pn">shadow</span>:</div>
<div class="sty" style="left:969px;top:252.10px">0 2px </div>
<div class="sty" style="left:946.6px;top:260.90px"><span class="pn">border-</span></div>
<div class="sty" style="left:961px;top:269.90px"><span class="pn">radius</span>:</div>
<div class="sty" style="left:964.7px;top:278.60px">4px;</div>
<div class="sty" style="left:946.6px;top:287.90px"><span class="pn">overflow</span>:</div>
<div class="sty" style="left:961px;top:304.90px">hidden;</div>
<div class="sty" style="left:934.6px;top:323.50px"><span class="pn">background</span>:</div>
<div class="sty" style="left:969px;top:332.50px">#fff;</div>
<div class="sty" style="left:946.6px;top:342.10px"><span class="pn">width</span>:</div>
<div class="sty" style="left:961px;top:350.50px">262px;</div>
<div class="sty" style="left:946.6px;top:360.20px"><span class="pn">display</span>:</div>
<div class="sty" style="left:961px;top:368.60px">inline-</div>
<div class="sty" style="left:961px;top:377.70px">block;</div>
<div class="sty" style="left:946.6px;top:386.60px"><span class="pn">vertical-</span></div>
<div class="sty" style="left:961px;top:395.50px"><span class="pn">align</span>:</div>
<div class="sty" style="left:961px;top:404.20px">top;</div>
<div class="sty" style="left:946.6px;top:413.80px"><span class="pn">margin</span>:</div>
<div class="sty" style="left:988px;top:413.80px">0</div>
<div class="sty" style="left:961px;top:422.70px">36px</div>
<div class="sty" style="left:961px;top:431.60px">36px 0;</div>
<div class="sty" style="left:934.6px;top:440.70px">}</div>
<div class="sty" style="left:934.6px;top:455.60px"><span style="font-style:italic;color:#333">dser agent s…</span></div>
<div class="sty" style="left:934.6px;top:463.50px"><span style="font-style:italic">i</span></div>
<div class="sty" style="left:934.6px;top:473.30px"><span style="font-style:italic">v {</span></div>
<div class="sty" style="left:947.2px;top:482.70px"><span style="font-style:italic;text-decoration:line-through;color:#c80000">display:</span></div>
<div class="sty" style="left:960.8px;top:491.30px"><span style="font-style:italic;text-decoration:line-through">block;</span></div>
<div class="sty" style="left:934.6px;top:501.20px"><span style="font-style:italic">}</span></div>
<div class="sty" style="left:934.6px;top:532.00px"><span style="text-decoration:underline;color:#555">common-0b903…</span></div>
<div class="sty" style="left:934.6px;top:541.40px">body {</div>
<div class="sty" style="left:947.2px;top:550.60px"><span style="text-decoration:line-through;color:#c80000">font-size:</span></div>
<div class="sty" style="left:960.8px;top:559.70px"><span style="text-decoration:line-through">16px;</span></div>
<div class="sty" style="left:947.2px;top:568.60px"><span class="pn">font-size</span>:</div>
<div class="sty" style="left:961px;top:577.70px">1rem;</div>
<div class="sty" style="left:947.2px;top:586.40px"><span class="pn">font-</span></div>
<div class="sty" style="left:961px;top:594.90px"><span class="pn">weight</span>:</div>
<div class="sty" style="left:961px;top:604.10px">normal;</div>
<div class="sty" style="left:947.2px;top:613.00px"><span class="pn">line-</span></div>
<div class="abs" style="left:931px;top:158.2px;width:67px;height:1px;background:#e0e0e0"></div>
<div class="abs" style="left:931px;top:453.5px;width:67px;height:1px;background:#e0e0e0"></div>
<div class="abs" style="left:931px;top:514.4px;width:67px;height:16px;background:#ececec;border-top:1px solid #dcdcdc;border-bottom:1px solid #dcdcdc"></div>
<div class="abs" style="left:934.9px;top:518.5px;font-size:8.4px;color:#333;line-height:1;white-space:nowrap">Inherited fro…</div>
<div class="abs" style="left:989.5px;top:516.5px;width:10px;height:12.5px;background:#fff;border:1px solid #d4d4d4;border-radius:1px"></div>
<div class="abs" style="left:962px;top:252.5px;width:5px;height:5px;border:0.8px solid #777;background:#fff"></div>
<div class="abs" style="left:963.5px;top:254px;width:5px;height:5px;border:0.8px solid #777;background:#fff"></div>
<div class="abs" style="left:961.5px;top:332.5px;width:6px;height:6px;border:0.8px solid #999;background:#fff"></div>
<div class="abs" style="left:958.6px;top:281px;width:0;height:0;border-left:3.5px solid #444;border-top:2.3px solid transparent;border-bottom:2.3px solid transparent"></div>
<div class="abs" style="left:958.6px;top:298.5px;width:0;height:0;border-left:3.5px solid #444;border-top:2.3px solid transparent;border-bottom:2.3px solid transparent"></div>
<div class="abs" style="left:980.8px;top:416.2px;width:0;height:0;border-left:3.5px solid #444;border-top:2.3px solid transparent;border-bottom:2.3px solid transparent"></div>
<div class="abs" style="left:986px;top:326px;width:0;height:0;border-left:3.5px solid #444;border-top:2.3px solid transparent;border-bottom:2.3px solid transparent"></div>

<!-- context menu -->
<div class="abs" style="left:714px;top:369px;width:112px;height:201px;background:#efefef;border-radius:4px;box-shadow:0 3px 8px rgba(0,0,0,.35),0 0 0 0.5px rgba(0,0,0,.15)"></div>
<div class="abs" style="left:714px;top:411.2px;width:112px;height:12.3px;background:#a3a3a8"></div>
<div class="abs" style="left:714px;top:427.5px;width:112px;height:1px;background:#d8d8d8"></div>
<div class="abs" style="left:714px;top:449.3px;width:112px;height:1px;background:#d8d8d8"></div>
<div class="abs" style="left:714px;top:497.4px;width:112px;height:1px;background:#d8d8d8"></div>
<div class="menu" style="left:728.8px;top:373.49px;color:#222">Add attribute</div>
<div class="menu" style="left:728.8px;top:386.49px;color:#222">Edit attribute</div>
<div class="menu" style="left:728.8px;top:399.49px;color:#222">Edit as HTML</div>
<div class="menu" style="left:728.8px;top:412.49px;color:#e4e4e6">Delete element</div>
<div class="menu" style="left:728.8px;top:434.49px;color:#222">Copy</div>
<svg class="abs" style="left:811.5px;top:435.40px" width="6" height="7"><path d="M0.2 0.3 L5.6 3.4 L0.2 6.5 Z" fill="#222"/></svg>
<div class="menu" style="left:728.8px;top:455.89px;color:#222">Hide element</div>
<div class="menu" style="left:728.8px;top:469.29px;color:#222">Force state</div>
<svg class="abs" style="left:811.5px;top:470.20px" width="6" height="7"><path d="M0.2 0.3 L5.6 3.4 L0.2 6.5 Z" fill="#222"/></svg>
<div class="menu" style="left:728.8px;top:482.09px;color:#222">Break on</div>
<svg class="abs" style="left:811.5px;top:483.00px" width="6" height="7"><path d="M0.2 0.3 L5.6 3.4 L0.2 6.5 Z" fill="#222"/></svg>
<div class="menu" style="left:728.8px;top:504.09px;color:#222">Expand recursively</div>
<div class="menu" style="left:728.8px;top:517.09px;color:#222">Collapse children</div>
<div class="menu" style="left:728.8px;top:530.29px;color:#222">Scroll into view</div>
<div class="menu" style="left:728.8px;top:543.29px;color:#222">Focus</div>
<div class="menu" style="left:728.8px;top:556.29px;color:#222">Services</div>
<svg class="abs" style="left:811.5px;top:557.20px" width="6" height="7"><path d="M0.2 0.3 L5.6 3.4 L0.2 6.5 Z" fill="#222"/></svg>


</body></html>
